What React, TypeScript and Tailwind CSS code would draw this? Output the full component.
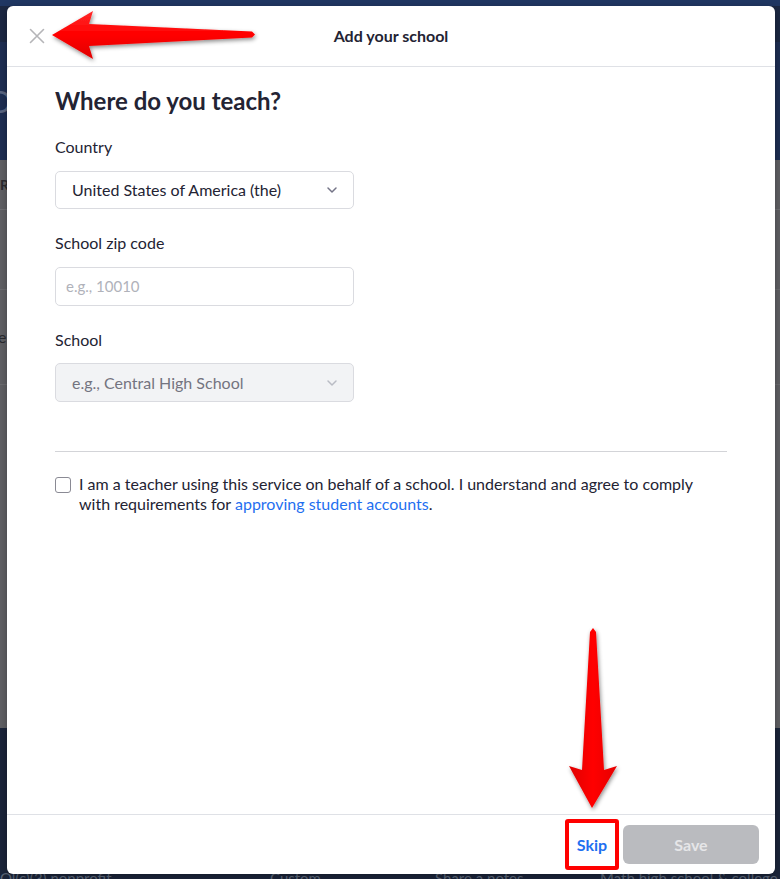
import React from "react";

function Chevron({ color }: { color: string }) {
  return (
    <svg width="12" height="8" viewBox="0 0 12 8" fill="none">
      <path d="M2 2l4 4 4-4" stroke={color} strokeWidth="1.5" strokeLinecap="round" strokeLinejoin="round" />
    </svg>
  );
}

export default function App() {
  return (
    <div className="relative w-[780px] h-[879px] overflow-hidden [font-family:Lato,'Noto_Sans',sans-serif] bg-[#1b253a]">
      {/* background page */}
      <div className="flex flex-col w-full h-full">
        <div className="h-[6px] bg-[#203763]" />
        <div className="h-[36px] bg-[#1c2843]" />
        <div className="h-[118px] bg-[#1e2e53] flex items-center">
          <span className="text-[30px] text-[#5a6682] -ml-[12px]">O</span>
        </div>
        <div className="h-[568px] bg-[#606064] flex flex-col">
          <div className="h-[50px] border-b border-[#707074] flex items-center">
            <span className="text-[14px] font-bold text-[#2a2a2e]">R</span>
          </div>
          <div className="h-[80px] border-b border-[#6c6c70]" />
          <div className="h-[95px] border-b border-[#6c6c70] flex items-center">
            <span className="text-[16px] text-[#2a2a2e] -ml-[2px]">e</span>
          </div>
        </div>
        <div className="flex-1 bg-[#1b253a] flex flex-col justify-end">
          <div className="flex text-[15px] text-[#5c6678] leading-[14px] h-[8px] overflow-visible">
            <span className="w-[270px]">Ol(c)(3) nonprofit</span>
            <span className="w-[165px]">Custom</span>
            <span className="w-[165px]">Share a notes</span>
            <span>Math high school &amp; college</span>
          </div>
        </div>
      </div>

      {/* modal */}
      <div className="absolute left-[7px] top-[6px] w-[768px] h-[868px] bg-white rounded-[6px] flex flex-col text-[#232333] shadow-[0_2px_8px_rgba(0,0,0,0.3)]">
        <div className="h-[61px] border-b border-[#dfe1e6] grid grid-cols-[60px_1fr_60px] items-center shrink-0">
          <div className="flex items-center justify-center">
            <svg width="16" height="16" viewBox="0 0 16 16">
              <path d="M1.5 1.5l13 13M14.5 1.5l-13 13" stroke="#b5b5b8" strokeWidth="1.6" strokeLinecap="round" />
            </svg>
          </div>
          <div className="text-center text-[16px] font-bold">Add your school</div>
          <div />
        </div>

        <div className="flex-1 px-12 pt-[19px] flex flex-col">
          <h1 className="text-[24px] font-bold leading-[29px]">Where do you teach?</h1>

          <div className="mt-[22px] text-[16px] leading-[19px]">Country</div>
          <div className="mt-[15px] w-[299px] h-[38px] border border-[#dadbe0] rounded-[5px] pl-4 pr-[15px] flex items-center justify-between">
            <span className="text-[16px]">United States of America (the)</span>
            <Chevron color="#747487" />
          </div>

          <div className="mt-[24px] text-[16px] leading-[19px]">School zip code</div>
          <div className="mt-[15px] w-[299px] h-[39px] border border-[#dadbe0] rounded-[5px] px-[10px] flex items-center">
            <span className="text-[15px] text-[#b0b2ba]">e.g., 10010</span>
          </div>

          <div className="mt-[24px] text-[16px] leading-[19px]">School</div>
          <div className="mt-[14px] w-[299px] h-[39px] border border-[#dadbe0] bg-[#f2f3f5] rounded-[5px] pl-4 pr-[15px] flex items-center justify-between">
            <span className="text-[16px] text-[#747480]">e.g., Central High School</span>
            <Chevron color="#b9bcc4" />
          </div>

          <div className="mt-[49px] h-px bg-[#d3d4d8]" />

          <div className="mt-[22px] flex items-start gap-2">
            <div className="mt-[3px] w-4 h-4 shrink-0 border border-[#8a8a94] rounded-[3px] bg-white" />
            <p className="text-[16px] leading-5">
              I am a teacher using this service on behalf of a school. I understand and agree to comply with
              requirements for <span className="text-[#1f6ff0]">approving student accounts</span>.
            </p>
          </div>
        </div>

        <div className="h-[60px] border-t border-[#dfe1e6] flex items-center justify-end gap-1 pr-4 shrink-0">
          <div className="w-[54px] h-[51px] border-4 border-[#ff0000] rounded-[3px] flex items-center justify-center bg-white">
            <span className="text-[16px] font-bold text-[#1f6ff0] leading-none">Skip</span>
          </div>
          <button className="w-[136px] h-[39px] rounded-[6px] bg-[#babbbf] text-[#e6e6e8] text-[16px] font-bold leading-none">
            Save
          </button>
        </div>
      </div>

      {/* red annotation arrows */}
      <svg className="absolute left-0 top-0 pointer-events-none" width="780" height="879" viewBox="0 0 780 879">
        <defs>
          <filter id="sh" x="-20%" y="-20%" width="140%" height="140%">
            <feDropShadow dx="1" dy="2" stdDeviation="2" floodColor="#000" floodOpacity="0.45" />
          </filter>
          <linearGradient id="gv" x1="0" y1="0" x2="0" y2="1">
            <stop offset="0" stopColor="#ff2a2a" />
            <stop offset="0.5" stopColor="#ff0000" />
            <stop offset="1" stopColor="#e00000" />
          </linearGradient>
          <linearGradient id="gh" x1="0" y1="0" x2="1" y2="0">
            <stop offset="0" stopColor="#e00000" />
            <stop offset="0.5" stopColor="#ff0000" />
            <stop offset="1" stopColor="#e60000" />
          </linearGradient>
        </defs>
        <polygon
          filter="url(#sh)"
          fill="url(#gv)"
          points="52,35 93,11 89,24 252,31.5 255,34.5 252,37.5 89,46 93,59"
        />
        <polygon
          filter="url(#sh)"
          fill="url(#gh)"
          points="592,808 569,766 582,770 590,632 593,628 596,632 604,770 617,766"
        />
      </svg>
    </div>
  );
}
